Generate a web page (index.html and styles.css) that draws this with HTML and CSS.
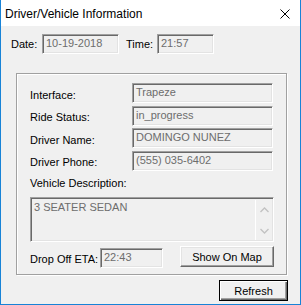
FILE: index.html
```html
<!DOCTYPE html>
<html lang="en">
<head>
  <meta charset="UTF-8" />
  <title>Driver/Vehicle Information</title>
  <link rel="stylesheet" href="styles.css">
</head>
<body>
  <div class="window">
    <div class="titlebar">
      <span class="title">Driver/Vehicle Information</span>
      <svg class="close" width="10" height="10" viewBox="0 0 10 10">
        <path d="M0.5 0.5 L9.5 9.5 M9.5 0.5 L0.5 9.5" stroke="#000" stroke-width="1" fill="none"/>
      </svg>
    </div>

    <div class="content">
      <div class="date-row">
        <span class="label date-label">Date:</span>
        <div class="field date-field">10-19-2018</div>
        <span class="label time-label">Time:</span>
        <div class="field time-field">21:57</div>
      </div>

      <div class="group">
        <div class="info-grid">
          <span class="label">Interface:</span>
          <div class="field">Trapeze</div>
          <span class="label">Ride Status:</span>
          <div class="field">in_progress</div>
          <span class="label">Driver Name:</span>
          <div class="field">DOMINGO NUNEZ</div>
          <span class="label">Driver Phone:</span>
          <div class="field">(555) 035-6402</div>
        </div>

        <div class="label desc-label">Vehicle Description:</div>
        <div class="textarea">
          <div class="textarea-text">3 SEATER SEDAN</div>
          <div class="scrollbar">
            <svg width="9" height="6" viewBox="0 0 9 6"><path d="M0.5 5 L4.5 1 L8.5 5" stroke="#c2c2c2" stroke-width="1.3" fill="none"/></svg>
            <svg width="9" height="6" viewBox="0 0 9 6"><path d="M0.5 1 L4.5 5 L8.5 1" stroke="#c2c2c2" stroke-width="1.3" fill="none"/></svg>
          </div>
        </div>

        <div class="eta-row">
          <span class="label eta-label">Drop Off ETA:</span>
          <div class="field eta-field">22:43</div>
          <button class="btn map-btn">Show On Map</button>
        </div>
      </div>

      <div class="footer">
        <button class="btn default-btn">Refresh</button>
      </div>
    </div>
  </div>
</body>
</html>
```

FILE: styles.css
```css
body {
  margin: 0;
  padding: 0;
  font-family: "Liberation Sans", Arial, sans-serif;
  font-size: 11px;
  color: #000;
  background-color: #f0f0f0;
}

.window {
  width: 301px;
  height: 305px;
  box-sizing: border-box;
  border: 1px solid #1883d7;
  border-top: none;
  background-color: #f0f0f0;
  overflow: hidden;
}

.titlebar {
  height: 26px;
  background-color: #fff;
  display: flex;
  align-items: center;
  justify-content: space-between;
  padding: 0 10px 0 4px;
}

.title {
  font-size: 12px;
  padding-top: 1px;
}

.close {
  display: block;
  margin-top: 1px;
}

.content {
  padding-top: 8px;
}

.label {
  font-size: 11px;
  line-height: 13px;
}

.field {
  box-sizing: border-box;
  height: 20px;
  line-height: 16px;
  padding: 0 3px;
  color: #6d6d6d;
  background-color: #f0f0f0;
  border-top: 1px solid #a0a0a0;
  border-left: 1px solid #a0a0a0;
  border-bottom: 1px solid #fff;
  border-right: 1px solid #fff;
  box-shadow: inset 1px 1px 0 #696969, inset -1px -1px 0 #e3e3e3;
  white-space: nowrap;
  overflow: hidden;
}

.date-row {
  display: flex;
  align-items: center;
  padding-left: 10px;
}

.date-label,
.time-label {
  width: 31px;
  padding-top: 1px;
}

.date-field {
  width: 77px;
}

.time-label {
  margin-left: 7px;
}

.time-field {
  width: 57px;
}

.group {
  box-sizing: border-box;
  width: 271px;
  height: 202px;
  margin: 19px 0 0 15px;
  border: 1px solid #a0a0a0;
  box-shadow: inset 1px 1px 0 #fff, 1px 1px 0 #fff;
  padding: 9px 12px 0 13px;
}

.info-grid {
  display: grid;
  grid-template-columns: 102px 141px;
  grid-auto-rows: 20px;
  row-gap: 2.67px;
  align-items: center;
}

.info-grid .label {
  padding-top: 4px;
}

.desc-label {
  margin-top: 6px;
  height: 13px;
}

.textarea {
  box-sizing: border-box;
  width: 244px;
  height: 45px;
  margin-top: 7px;
  display: flex;
  color: #6d6d6d;
  border-top: 1px solid #a0a0a0;
  border-left: 1px solid #a0a0a0;
  border-bottom: 1px solid #fff;
  border-right: 1px solid #fff;
  box-shadow: inset 1px 1px 0 #696969, inset -1px -1px 0 #e3e3e3;
}

.textarea-text {
  flex: 1;
  padding: 3px 0 0 3px;
  line-height: 13px;
}

.scrollbar {
  width: 16px;
  margin: 2px 1px 1px 0;
  border-left: 1px solid #fff;
  display: flex;
  flex-direction: column;
  align-items: center;
  justify-content: space-between;
  padding: 7px 0 6px;
}

.scrollbar svg {
  display: block;
}

.eta-row {
  display: flex;
  align-items: center;
  margin-top: 4px;
}

.eta-label {
  width: 70px;
  padding-top: 6px;
}

.eta-field {
  width: 63px;
  margin-top: 2px;
}

.btn {
  box-sizing: border-box;
  font-family: "Liberation Sans", Arial, sans-serif;
  font-size: 11px;
  color: #000;
  background-color: #f0f0f0;
  border-top: 1px solid #fff;
  border-left: 1px solid #fff;
  border-bottom: 1px solid #696969;
  border-right: 1px solid #696969;
  box-shadow: inset -1px -1px 0 #a0a0a0, inset 1px 1px 0 #e3e3e3;
  padding: 0;
  margin: 0;
}

.map-btn {
  width: 94px;
  height: 21px;
  margin-left: 17px;
}

.footer {
  display: flex;
  justify-content: flex-end;
  padding: 5px 12px 0 0;
}

.default-btn {
  width: 69px;
  height: 21px;
  border: 1px solid #000;
  box-shadow: inset 1px 1px 0 #fff, inset -1px -1px 0 #696969, inset -2px -2px 0 #a0a0a0;
}
```
